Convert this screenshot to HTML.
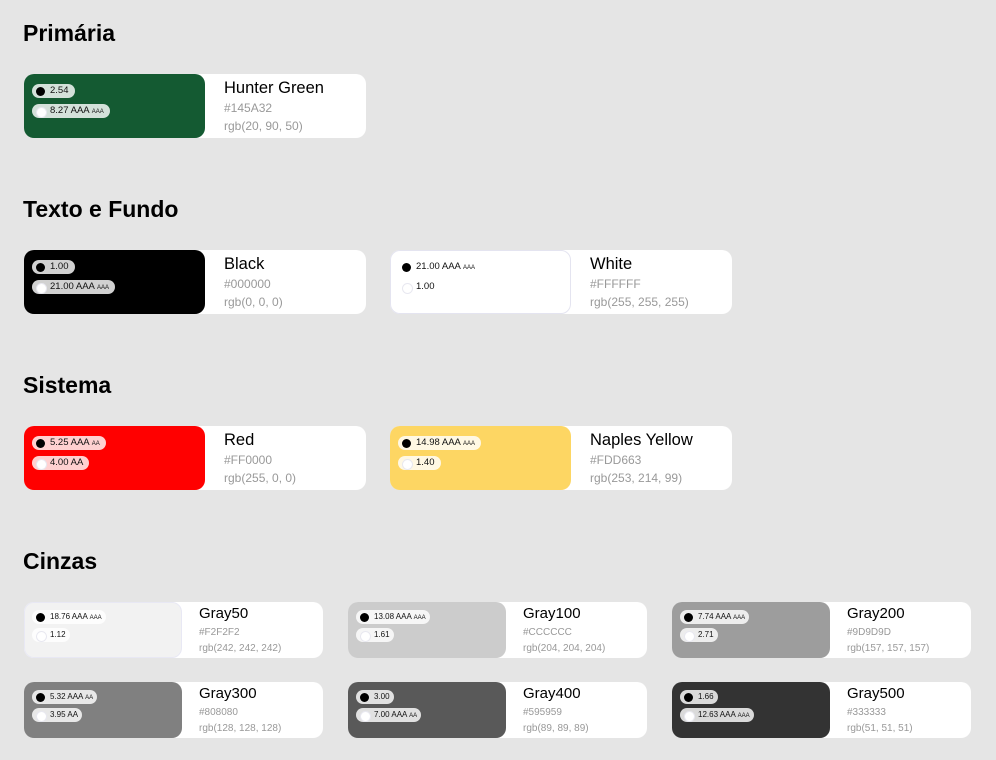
<!DOCTYPE html><html><head><meta charset="utf-8"><style>
*{margin:0;padding:0;box-sizing:border-box}
body{width:996px;height:760px;background:#e5e5e5;font-family:"Liberation Sans",sans-serif;position:relative;overflow:hidden}
h2{position:absolute;left:23px;font-size:23px;font-weight:bold;color:#000}
.c{position:absolute;background:#fff;border-radius:10px}
.big{width:342px;height:64px}
.sm{width:299px;height:56px}
.sw{position:absolute;left:0;top:0;bottom:0;border-radius:10px}
.big .sw{width:181px}.sm .sw{width:158px}
.b{position:absolute;left:8px;height:14px;border-radius:7px;background:rgba(255,255,255,.82);font-size:9.5px;color:#111;line-height:14px;padding:0 6px 0 18px;white-space:nowrap}
.b::before{content:"";position:absolute;left:4px;top:2.5px;width:9px;height:9px;border-radius:50%;background:#000}
.b.w::before{background:#fff;border:1px solid #e8e8f0}
.b small{font-size:6px}
.big .b1{top:10px}.big .b2{top:30px}
.sm .b1{top:8px;font-size:8px;padding-right:4px}.sm .b2{top:26px;font-size:8px;padding-right:4px}
.n{position:absolute;color:#000}
.h{position:absolute;color:#999}
.big .n{left:200px;top:5px;font-size:16.5px}
.big .h{left:200px;font-size:12px}
.big .h1{top:27px}.big .h2{top:45px}
.sm .n{left:175px;top:3px;font-size:15px}
.sm .h{left:175px;font-size:10px}
.sm .h1{top:25px}.sm .h2{top:41px}
</style></head><body>
<h2 style="top:20px">Primária</h2>
<div class="c big" style="left:24px;top:74px"><div class="sw" style="background:#145A32"></div>
<div class="b b1">2.54</div><div class="b w b2">8.27 AAA <small>AAA</small></div>
<div class="n">Hunter Green</div><div class="h h1">#145A32</div><div class="h h2">rgb(20, 90, 50)</div></div>

<h2 style="top:196px">Texto e Fundo</h2>
<div class="c big" style="left:24px;top:250px"><div class="sw" style="background:#000"></div>
<div class="b b1">1.00</div><div class="b w b2">21.00 AAA <small>AAA</small></div>
<div class="n">Black</div><div class="h h1">#000000</div><div class="h h2">rgb(0, 0, 0)</div></div>
<div class="c big" style="left:390px;top:250px"><div class="sw" style="background:#fff;border:1px solid #e4e4f0"></div>
<div class="b b1">21.00 AAA <small>AAA</small></div><div class="b w b2">1.00</div>
<div class="n">White</div><div class="h h1">#FFFFFF</div><div class="h h2">rgb(255, 255, 255)</div></div>

<h2 style="top:372px">Sistema</h2>
<div class="c big" style="left:24px;top:426px"><div class="sw" style="background:#f00"></div>
<div class="b b1">5.25 AAA <small>AA</small></div><div class="b w b2">4.00 AA</div>
<div class="n">Red</div><div class="h h1">#FF0000</div><div class="h h2">rgb(255, 0, 0)</div></div>
<div class="c big" style="left:390px;top:426px"><div class="sw" style="background:#FDD663"></div>
<div class="b b1">14.98 AAA <small>AAA</small></div><div class="b w b2">1.40</div>
<div class="n">Naples Yellow</div><div class="h h1">#FDD663</div><div class="h h2">rgb(253, 214, 99)</div></div>

<h2 style="top:548px">Cinzas</h2>
<div class="c sm" style="left:24px;top:602px"><div class="sw" style="background:#F2F2F2;border:1px solid #e8e8f4"></div>
<div class="b b1">18.76 AAA <small>AAA</small></div><div class="b w b2">1.12</div>
<div class="n">Gray50</div><div class="h h1">#F2F2F2</div><div class="h h2">rgb(242, 242, 242)</div></div>
<div class="c sm" style="left:348px;top:602px"><div class="sw" style="background:#CCCCCC"></div>
<div class="b b1">13.08 AAA <small>AAA</small></div><div class="b w b2">1.61</div>
<div class="n">Gray100</div><div class="h h1">#CCCCCC</div><div class="h h2">rgb(204, 204, 204)</div></div>
<div class="c sm" style="left:672px;top:602px"><div class="sw" style="background:#9D9D9D"></div>
<div class="b b1">7.74 AAA <small>AAA</small></div><div class="b w b2">2.71</div>
<div class="n">Gray200</div><div class="h h1">#9D9D9D</div><div class="h h2">rgb(157, 157, 157)</div></div>
<div class="c sm" style="left:24px;top:682px"><div class="sw" style="background:#808080"></div>
<div class="b b1">5.32 AAA <small>AA</small></div><div class="b w b2">3.95 AA</div>
<div class="n">Gray300</div><div class="h h1">#808080</div><div class="h h2">rgb(128, 128, 128)</div></div>
<div class="c sm" style="left:348px;top:682px"><div class="sw" style="background:#595959"></div>
<div class="b b1">3.00</div><div class="b w b2">7.00 AAA <small>AA</small></div>
<div class="n">Gray400</div><div class="h h1">#595959</div><div class="h h2">rgb(89, 89, 89)</div></div>
<div class="c sm" style="left:672px;top:682px"><div class="sw" style="background:#333333"></div>
<div class="b b1">1.66</div><div class="b w b2">12.63 AAA <small>AAA</small></div>
<div class="n">Gray500</div><div class="h h1">#333333</div><div class="h h2">rgb(51, 51, 51)</div></div>
</body></html>
